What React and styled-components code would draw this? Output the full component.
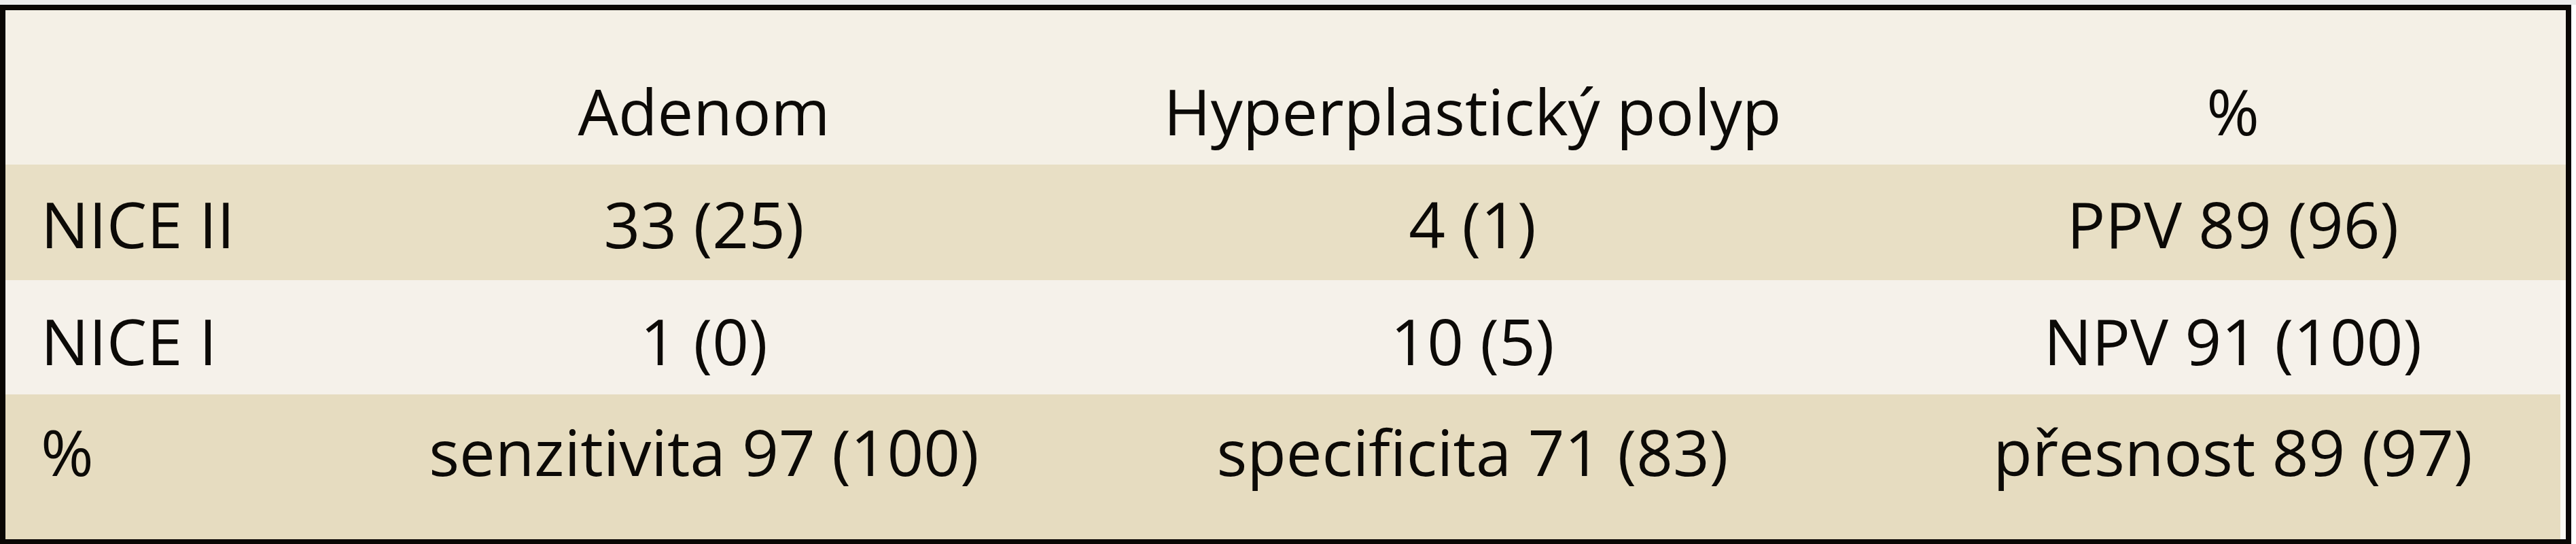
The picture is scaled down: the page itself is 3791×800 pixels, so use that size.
import React from 'react';
import styled, { createGlobalStyle } from 'styled-components';

const GlobalStyle = createGlobalStyle`
  html, body {
    margin: 0;
    padding: 0;
    background: #ffffff;
  }
  body {
    font-family: "Open Sans", "Liberation Sans", sans-serif;
  }
`;

const Page = styled.div`
  width: 3791px;
  height: 800px;
  padding-top: 7px;
  box-sizing: border-box;
  background: linear-gradient(180deg, #ececec 0px, #ececec 7px, #ffffff 7px);
`;

const Table = styled.div`
  width: 3784px;
  height: 793px;
  box-sizing: border-box;
  border: 8px solid #0a0704;
  border-bottom-width: 7px;
  display: flex;
  flex-direction: column;
  background: #e6dcc0;
`;

const Row = styled.div`
  display: grid;
  grid-template-columns: 534px 988px 1274px 1fr;
  height: ${(p) => p.$height}px;
  box-sizing: border-box;
  padding-top: ${(p) => p.$top}px;
  background: ${(p) => p.$bg};
  border-right: 8px solid ${(p) => p.$edge};
  font-size: 94px;
  line-height: 94px;
  color: #0c0a07;
`;

const Cell = styled.div`
  text-align: ${(p) => (p.$first ? 'left' : 'center')};
  padding-left: ${(p) => (p.$first ? '52px' : '0')};
  white-space: nowrap;
`;

const rows = [
  { cells: ['', 'Adenom', 'Hyperplastický polyp', '%'], bg: '#f4f0e6', edge: '#f6f2ea', h: 227, top: 101 },
  { cells: ['NICE II', '33 (25)', '4 (1)', 'PPV 89 (96)'], bg: '#e8dfc5', edge: '#ebe3cc', h: 170, top: 40 },
  { cells: ['NICE I', '1 (0)', '10 (5)', 'NPV 91 (100)'], bg: '#f5f1ea', edge: '#fbf9f4', h: 168, top: 42 },
  { cells: ['%', 'senzitivita 97 (100)', 'specificita 71 (83)', 'přesnost 89 (97)'], bg: '#e6dcc0', edge: '#fbf9f2', h: 213, top: 37 },
];

export default function App() {
  return (
    <>
      <GlobalStyle />
      <Page>
        <Table>
          {rows.map((r, i) => (
            <Row key={i} $bg={r.bg} $edge={r.edge} $height={r.h} $top={r.top}>
              {r.cells.map((c, j) => (
                <Cell key={j} $first={j === 0}>{c}</Cell>
              ))}
            </Row>
          ))}
        </Table>
      </Page>
    </>
  );
}
